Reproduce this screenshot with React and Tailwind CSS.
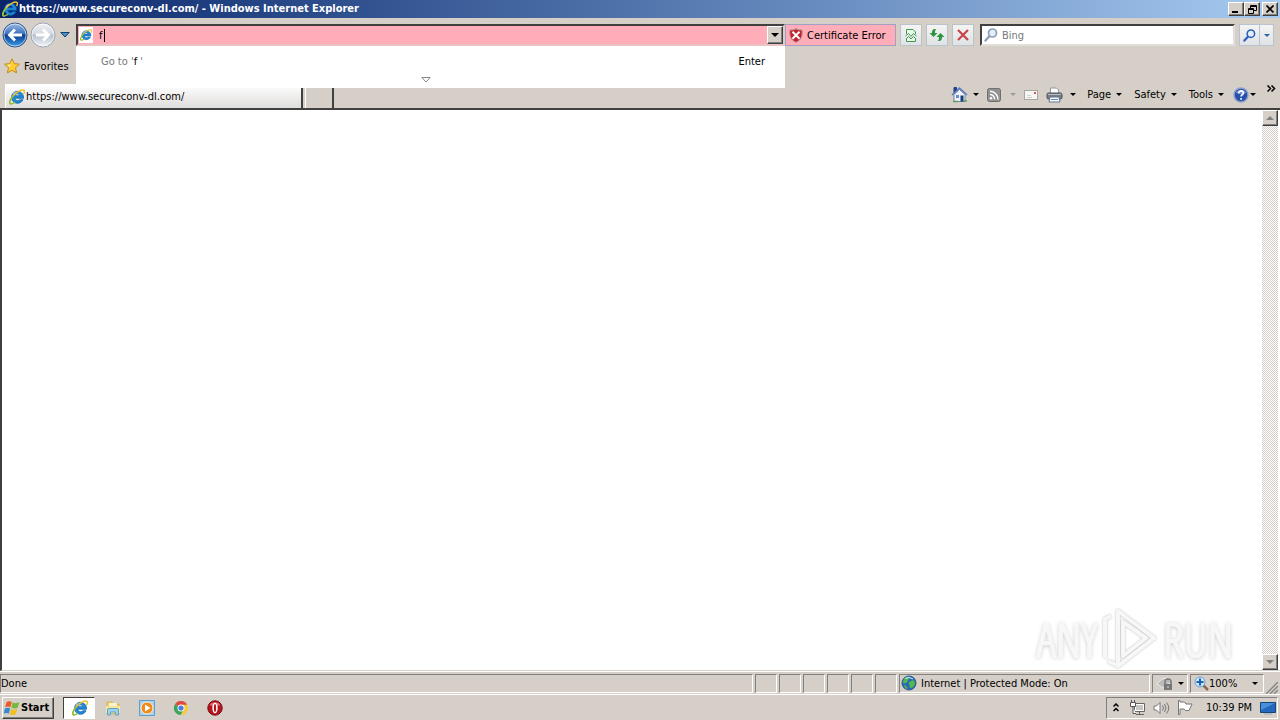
import React, { useState } from "react";

const raised =
  "border border-t-white border-l-white border-r-[#404040] border-b-[#404040] bg-[#d6cfc8] shadow-[inset_-1px_-1px_0_#808080]";
const sunken = "border border-t-[#808080] border-l-[#808080] border-r-white border-b-white";
const glass = "flex h-[22px] items-center justify-center border border-[#b9c3cf] bg-gradient-to-b from-[#f4f4f2] to-[#dfe3e6]";

function Caret({ className = "" }) {
  return (
    <svg className={className} width="6" height="3" viewBox="0 0 6 3" aria-hidden="true">
      <path d="M0 0h6L3 3z" fill="currentColor" />
    </svg>
  );
}

function IeLogo({ size = 16 }) {
  return (
    <svg className="shrink-0" width={size} height={size} viewBox="0 0 16 16" aria-hidden="true">
      <path d="M14 10.700A6 6 0 1 1 14.500 8v1.300H5.800c.2 2.700 3.700 3 4.800 1.400zM5.900 6.700h4.900c-.4-2.500-4.500-2.400-4.900 0z" fill="#1f8ad8" stroke="#0c5aa6" strokeWidth=".7" fillRule="evenodd" />
      <path d="M4 5.500c1-1.400 2.600-2.100 4.200-2.200" stroke="#9be0fb" strokeWidth="1.200" fill="none" />
      <path d="M2.500 14.900C-.6 15.400.7 10.700 4 7c3.500-4 9.300-7.200 11-5.500.8.800.3 2.300-.4 3.500" fill="none" stroke="#f0c12c" strokeWidth="1.500" />
      <path d="M4 7c-3.300 3.700-4.600 8.400-1.500 7.900 1.200-.1 2.500-.9 3.600-1.700" fill="none" stroke="#8abf3b" strokeWidth="1.400" />
    </svg>
  );
}

function Arrow({ back }) {
  return (
    <svg className="block" width="26" height="26" viewBox="0 0 26 26" aria-hidden="true">
      <defs>
        <linearGradient id={back ? "bk" : "fw"} x1="0" y1="0" x2="0" y2="1">
          <stop offset="0" stopColor={back ? "#9fbce6" : "#f0f2f5"} />
          <stop offset=".45" stopColor={back ? "#3d71bd" : "#d4dae3"} />
          <stop offset=".5" stopColor={back ? "#083b91" : "#b6c0ce"} />
          <stop offset="1" stopColor={back ? "#3fa1e8" : "#f6f8fb"} />
        </linearGradient>
      </defs>
      <circle cx="13" cy="13" r="12" fill={back ? "url(#bk)" : "url(#fw)"} stroke={back ? "#305387" : "#97a2b3"} />
      <circle cx="13" cy="13" r="11" fill="none" stroke="#fff" strokeOpacity=".6" />
      <path
        d={back ? "M20 13H8M13 7.500L7.500 13l5.500 5.500" : "M6 13h12M13 7.500l5.500 5.500-5.500 5.500"}
        fill="none"
        stroke="#fff"
        strokeWidth="2.800"
      />
    </svg>
  );
}

function Magnifier({ color = "#2f5fc0", lens = "#e3effb", size = 14 }) {
  return (
    <svg width={size} height={size} viewBox="0 0 14 14" aria-hidden="true">
      <path d="M1.500 12.500l4-4.500" stroke={color} strokeWidth="2.400" strokeLinecap="round" />
      <circle cx="8.500" cy="5" r="4" fill={lens} stroke={color} strokeWidth="1.700" />
    </svg>
  );
}

function WindowsFlag() {
  return (
    <svg className="shrink-0" width="16" height="16" viewBox="0 0 16 16" aria-hidden="true">
      <path d="M2.600 2c2-1.300 3.600-1 5.200 0L6.400 7.300c-1.600-1-3.300-1.100-5.200 0z" fill="#ea5a25" />
      <path d="M8.600 2.500c1.800.9 3.800 1 6.700-.5L13.700 7.600c-2.300 1.200-4.300 1-6.300.1z" fill="#75b93b" />
      <path d="M.9 8.500c2-1.200 3.700-1 5.300 0l-1.500 5.200c-1.600-.9-3.300-1-5.200.1z" fill="#348bd4" />
      <path d="M7.100 9c1.900 1 4 1 6.300-.2l-1.600 5.400c-2.200 1.200-4.200 1-6.200.1z" fill="#f3bd26" />
    </svg>
  );
}

function Home() {
  return (
    <svg width="17" height="17" viewBox="0 0 17 17" aria-hidden="true">
      <path d="M3 8.500V15.500h11V8.500L8.500 3.500z" fill="#edf2fb" stroke="#7386ac" />
      <path d="M3 7V1.500h2.500v3" fill="#253e91" stroke="#253e91" />
      <path d="M1 9l7.500-7L16 9" fill="none" stroke="#5a78bd" strokeWidth="1.500" />
      <path d="M5 9h3v3H5z" fill="#6a8cc7" />
      <path d="M9.500 9.500h3v6h-3z" fill="#163d72" />
      <path d="M2 15.500h5M13 15h3" stroke="#62a04c" strokeWidth="1.500" />
    </svg>
  );
}

function Feed() {
  return (
    <svg width="14" height="14" viewBox="0 0 14 14" aria-hidden="true">
      <rect x=".5" y=".5" width="13" height="13" rx="2" fill="#929292" stroke="#6f6f6f" />
      <circle cx="4" cy="10.300" r="1.300" fill="#fff" />
      <path d="M3 6.500a4.500 4.500 0 0 1 4.600 4.900M3 3.300a8 8 0 0 1 8 8.100" fill="none" stroke="#fff" strokeWidth="1.500" />
    </svg>
  );
}

function Mail() {
  return (
    <svg width="14" height="10" viewBox="0 0 14 10" aria-hidden="true">
      <rect x=".5" y=".5" width="13" height="9" fill="#f7f6f5" stroke="#a8a5a5" />
      <path d="M10 2h2v2h-2z" fill="#d45b5b" />
      <path d="M3 5.500h4M3 7.500h5" stroke="#d3d0d0" />
    </svg>
  );
}

function Printer() {
  return (
    <svg width="17" height="16" viewBox="0 0 17 16" aria-hidden="true">
      <path d="M4.500 6V1h6l2 2v3" fill="#fff" stroke="#92959b" />
      <rect x="1" y="6" width="15" height="6" rx="1.500" fill="#777d86" stroke="#4e535b" />
      <path d="M2 7.500h13" stroke="#b9bec5" />
      <path d="M4 10h9l1 5H3z" fill="#f6f9fd" stroke="#6c7686" />
      <path d="M5 12.500h7" stroke="#5c8fca" />
    </svg>
  );
}

function Help() {
  return (
    <svg width="16" height="16" viewBox="0 0 16 16" aria-hidden="true">
      <circle cx="8" cy="8" r="7" fill="#2650ad" stroke="#8fa2c8" strokeWidth="1.500" />
      <path d="M3 6a5.500 5.500 0 0 1 10 0c-3 1.500-7 1.500-10 0z" fill="#6f94da" />
      <path d="M5.700 6.300c0-3.200 4.900-3 4.700-.2-.1 1.500-2.300 1.700-2.300 3.500M8.100 11v1.800" stroke="#fff" strokeWidth="1.700" fill="none" />
    </svg>
  );
}

function Shield() {
  return (
    <svg width="14" height="15" viewBox="0 0 14 15" aria-hidden="true">
      <path d="M7 .7C5 2 3 2.200 1 2c-.6 5 .3 10 6 12.300C12.700 12 13.600 7 13 2 11 2.200 9 2 7 .7z" fill="#c7232c" stroke="#a88f91" />
      <path d="M3.500 3.700l7 7M10.500 3.700l-7 7" stroke="#fff" strokeWidth="2" />
    </svg>
  );
}

function Menu({ label, children, faded }) {
  return (
    <button aria-label={label} className="flex h-5 items-center gap-[5px]">
      {children || label}
      <Caret className={faded ? "text-[#a09b98]" : ""} />
    </button>
  );
}

function TitleBar() {
  const box = `${raised} flex h-[14px] w-4 items-center justify-center`;
  return (
    <header className="flex h-[18px] items-center bg-gradient-to-r from-[#0a246a] to-[#a6caf0] pr-[2px] pl-[2px] text-white">
      <IeLogo />
      <h1 className="ml-[1px] flex-1 truncate text-[11px] font-bold">https://www.secureconv-dl.com/ - Windows Internet Explorer</h1>
      <button aria-label="Minimize" className={box}>
        <svg width="8" height="8"><path d="M0 6h6v2H0z" /></svg>
      </button>
      <button aria-label="Restore" className={box}>
        <svg width="9" height="9" fill="none" stroke="#000"><path d="M2.500 3V.5h6v5H6M2 1.500h7M.5 3.500h5v5h-5zM0 4.500h6" /></svg>
      </button>
      <button aria-label="Close" className={`${box} ml-[2px]`}>
        <svg width="8" height="8" stroke="#000" strokeWidth="1.700"><path d="M.5.5l7 7M7.500.5l-7 7" /></svg>
      </button>
    </header>
  );
}

function AddressBar() {
  const [url, setUrl] = useState("f");
  return (
    <div className="relative min-w-0 flex-1">
      <div className="flex h-[22px] items-center border-2 border-t-[#404040] border-r-[#d6cfc8] border-b-[#e8c4c5] border-l-[#404040] bg-[#ffaeb9] pl-[1px]">
        <span className="flex h-4 w-[14px] items-center justify-center bg-white"><IeLogo size={12} /></span>
        <div className="flex min-w-0 flex-1 items-center pl-[6px]">
          <input aria-label="Address" value={url} onChange={(e) => setUrl(e.target.value)} className="w-[5px] bg-transparent pt-px outline-none" />
          <span className="h-[13px] w-px bg-black" />
        </div>
        <button aria-label="Show address list" className={`${raised} flex h-[18px] w-4 items-center justify-center`}>
          <svg width="8" height="4"><path d="M0 0h8L4 4z" /></svg>
        </button>
      </div>
      <div className="absolute top-full right-0 left-0 z-10 h-[42px] bg-white">
        <div className="flex items-center justify-between pt-[9px] pr-5 pl-[25px]">
          <span className="text-[#777]">Go to '<span className="text-black">f</span> '</span>
          <span>Enter</span>
        </div>
        <svg className="mx-auto mt-2 block w-[19px] pr-[9px]" width="19" height="6" fill="#fff" stroke="#888"><path d="M.8.5h8.400L5 5z" /></svg>
      </div>
    </div>
  );
}

function NavBar() {
  return (
    <div className="flex h-[34px] items-center pr-[6px] pl-[2px]">
      <button aria-label="Back"><Arrow back /></button>
      <button aria-label="Forward" className="ml-[2px]"><Arrow /></button>
      <button aria-label="Recent pages" className="ml-1 flex w-[10px] justify-center">
        <svg width="10" height="6"><path d="M.8.5h8.400L5 5z" fill="#4d91c9" stroke="#173f70" /></svg>
      </button>
      <div className="ml-[6px] flex min-w-0 flex-1">
        <AddressBar />
        <button className="flex h-[22px] w-[111px] items-center gap-1 border border-[#a59fc4] bg-[#ffaeb9] pl-[3px]">
          <Shield />
          <span className="whitespace-nowrap pt-px">Certificate Error</span>
        </button>
      </div>
      <div className="ml-1 flex gap-1">
        <button aria-label="Compatibility View" className={`${glass} w-[22px]`}>
          <svg width="12" height="14" fill="none" stroke="#3f9a4d"><path d="M1.500 6V1.500H8L10.500 4v2M1.500 10v3.500h9V10" fill="#eaf7ea" /><path d="M.5 8l3-2.500L6 8.500l2.500-3L11.500 8M1 11l2.500-2.500L6 11l2.500-2.500L11 11" /></svg>
        </button>
        <button aria-label="Refresh" className={`${glass} w-[22px]`}>
          <svg width="16" height="14" fill="#2f9440"><path d="M6 1C3.500 1 3 3 3 5H.5L4.500 9l4-4H6c0-2 0-3 1.500-4zM10 13c2.500 0 3-2 3-4h2.500l-4-4-4 4H10c0 2 0 3-1.500 4z" /></svg>
        </button>
        <button aria-label="Stop" className={`${glass} w-[22px]`}>
          <svg width="12" height="12" stroke="#c9434b" strokeWidth="2.200"><path d="M1 1l10 10M11 1L1 11" /></svg>
        </button>
      </div>
      <label className="ml-[6px] flex h-[22px] w-[255px] items-center gap-1 border-2 border-t-[#404040] border-r-[#e2dedb] border-b-[#e2dedb] border-l-[#404040] bg-white pl-[2px]">
        <Magnifier color="#8d9fb5" />
        <input aria-label="Search" placeholder="Bing" className="min-w-0 flex-1 bg-transparent pt-px outline-none placeholder:text-[#777]" />
      </label>
      <div className="ml-1 flex">
        <button aria-label="Search Bing" className={`${glass} w-[21px]`}><Magnifier size={13} /></button>
        <button aria-label="Search options" className={`${glass} -ml-px w-[15px] text-[#2c65a8]`}><Caret /></button>
      </div>
    </div>
  );
}

function TabRow() {
  return (
    <div className="flex h-7 items-end pl-[5px]">
      <button className="flex h-6 w-[298px] items-center gap-[1px] border-t border-r-2 border-l border-t-white border-r-[#404040] border-l-white bg-gradient-to-b from-white to-[#dfdddb] pl-[3px]">
        <IeLogo />
        <span>https://www.secureconv-dl.com/</span>
      </button>
      <button aria-label="New tab" className="ml-[2px] h-5 w-[29px] border-r-2 border-l border-r-[#404040] border-l-white" />
      <nav className="ml-auto flex h-full items-center pt-px pr-1">
        <Menu label="Home"><Home /></Menu>
        <span className="ml-2"><Menu label="Feeds" faded><span className="mr-1"><Feed /></span></Menu></span>
        <button aria-label="Read mail" className="ml-2"><Mail /></button>
        <span className="ml-2"><Menu label="Print"><span className="mr-[2px]"><Printer /></span></Menu></span>
        <span className="ml-[11px]"><Menu label="Page" /></span>
        <span className="ml-3"><Menu label="Safety" /></span>
        <span className="ml-3"><Menu label="Tools" /></span>
        <button aria-label="Help" className="ml-[9px] flex items-center gap-px"><Help /><Caret /></button>
        <button aria-label="More commands" className="ml-[11px] self-start pt-1">
          <svg width="9" height="7" fill="none" stroke="#000" strokeWidth="1.500"><path d="M.5.5l3 3-3 3M4.500.5l3 3-3 3" /></svg>
        </button>
      </nav>
    </div>
  );
}

function ScrollButton({ up }) {
  return (
    <button aria-label={up ? "Scroll up" : "Scroll down"} className={`${raised} flex h-4 w-4 items-center justify-center text-[#808080]`}>
      <svg className={up ? "rotate-180" : ""} width="8" height="4" fill="currentColor"><path d="M0 0h8L4 4z" /></svg>
    </button>
  );
}

function Watermark() {
  return (
    <div className="absolute right-[29px] -bottom-px flex h-16 items-center font-['Open_Sans_Condensed_Light','Open_Sans_Condensed','Roboto_Condensed',sans-serif] text-[48px] leading-none font-light text-[#f7f7f7] [-webkit-text-stroke:2px_#f7f7f7] [text-shadow:0_1px_4px_#aaa]">
      <span>ANY</span>
      <svg className="mx-1" width="58" height="64" viewBox="0 0 58 64" fill="none" strokeLinejoin="round">
        <g className="[filter:drop-shadow(0_0_1px_#bbb)]">
          <path d="M4 51V12l6-3M17 4l36 27-36 28zM22 15v34l23-18zM7 54l10 5" stroke="#f7f7f7" strokeWidth="4" />
        </g>
      </svg>
      <span>RUN</span>
    </div>
  );
}

function StatusBar() {
  return (
    <footer className="flex h-[23px] items-center gap-[2px] border-t border-white pr-[2px]">
      <div className={`${sunken} h-[19px] flex-1 leading-[17px]`}>Done</div>
      {[0, 1, 2, 3, 4, 5].map((n) => (
        <div key={n} className={`${sunken} h-[19px] w-[22px]`} />
      ))}
      <div className={`${sunken} flex h-[19px] w-[251px] items-center gap-1 pl-px`}>
        <svg width="16" height="16" viewBox="0 0 16 16" aria-hidden="true">
          <circle cx="8" cy="8" r="7" fill="#2668bd" stroke="#31598f" />
          <path d="M3 4c3-4 7-2 5 0s-1 3-3 4-3 0-3-1zM10 6c2-2 4 0 4 2s-2 5-4 5-1-3-2-4 0-2 2-3zM4 10l3 3-2 1-2-3z" fill="#54b948" />
          <path d="M4 3.500Q8 1 12 4" stroke="#c8edff" fill="none" />
        </svg>
        <span className="pt-px">Internet | Protected Mode: On</span>
      </div>
      <button aria-label="Privacy report" className={`${sunken} flex h-[19px] w-9 items-center justify-center gap-1`}>
        <svg width="18" height="15" viewBox="0 0 18 15" aria-hidden="true">
          <path d="M1 8l5-5 6-1 3 4-8 6z" fill="#bbb" stroke="#e9e9e9" />
          <path d="M9 8V6a3 3 0 0 1 6 0v2" fill="none" stroke="#777" strokeWidth="1.500" />
          <path d="M8 8h8v6H8z" fill="#777" /><path d="M12 10v2" stroke="#ddd" />
        </svg>
        <Caret />
      </button>
      <button aria-label="Zoom level 100%" className={`${sunken} flex h-[19px] w-[74px] items-center pl-[3px]`}>
        <svg width="15" height="15" viewBox="0 0 15 15" aria-hidden="true">
          <path d="M9 9l5 5" stroke="#8b684d" strokeWidth="2.500" />
          <circle cx="6" cy="6" r="5" fill="#cde7fa" stroke="#6da2d0" /><path d="M6 2.500v7M2.500 6h7" stroke="#1d60b4" strokeWidth="2" />
        </svg>
        <span className="pt-px">100%</span>
        <Caret className="mr-[5px] ml-auto" />
      </button>
      <svg className="self-end" width="12" height="12" aria-hidden="true"><path d="M0 12L12 0M4 12l8-8M8 12l4-4" stroke="#858585" strokeWidth="1.500" /></svg>
    </footer>
  );
}

function TaskBar() {
  return (
    <footer className="flex h-[26px] items-center border-t border-white pr-[2px] pl-[2px]">
      <button className={`${raised} flex h-[22px] w-[52px] items-center gap-px pl-px font-bold`}>
        <WindowsFlag />
        <span>Start</span>
      </button>
      <button aria-label="Internet Explorer" className="ml-[9px] flex h-[22px] w-8 items-center justify-center border border-t-[#404040] border-r-white border-b-white border-l-[#404040] bg-white pl-[2px]"><IeLogo /></button>
      <div className="ml-[10px] flex items-center gap-[18px]">
        <button aria-label="Explorer">
          <svg width="16" height="16" viewBox="0 0 16 16">
            <path d="M2 2h5l1 2h6v10H2z" fill="#edcf6a" stroke="#d6b44e" /><path d="M4 3h8v3H4z" fill="#f9f4d0" /><path d="M1 6h14v7H1z" fill="#f7e59c" />
            <path d="M2.500 15V10q0-1.500 1.500-1.500h8q1.500 0 1.500 1.500v5h-3v-3h-5v3z" fill="#9ed1ec" stroke="#58a4cf" />
          </svg>
        </button>
        <button aria-label="Media Player">
          <svg width="16" height="16" viewBox="0 0 16 16">
            <path d="M.5.5h15v15H.5z" fill="#a9d2f0" stroke="#5d9dcc" /><circle cx="8" cy="8" r="6" fill="#f18a1c" stroke="#fff0d1" /><path d="M6 4.500l5.500 3.500L6 11.500z" fill="#fff" />
          </svg>
        </button>
        <button aria-label="Chrome">
          <svg width="16" height="16" viewBox="0 0 16 16">
            <path d="M8 8L1.800 4.400A7 7 0 0 1 14.200 5z" fill="#de4a3c" /><path d="M8 8V4.700h6.200A7 7 0 0 1 7.500 15z" fill="#f8ca3e" /><path d="M8 8l2.500 2L7.500 15A7 7 0 0 1 1.800 4.400z" fill="#3fa45b" />
            <circle cx="8" cy="8" r="3.500" fill="#fff" /><circle cx="8" cy="8" r="2.600" fill="#477fe1" />
          </svg>
        </button>
        <button aria-label="Opera">
          <svg width="16" height="16" viewBox="0 0 16 16"><circle cx="8" cy="8" r="7.200" fill="#b8131b" stroke="#760a11" /><path d="M2.500 5.500C4 1 12 1 13.500 5.500z" fill="#e27274" /><ellipse cx="8" cy="8" rx="2.700" ry="5.300" fill="#fff" /><ellipse cx="8" cy="8" rx="1.100" ry="4" fill="#b8131b" /></svg>
        </button>
      </div>
      <div className={`${sunken} ml-auto flex h-[22px] w-[172px] items-center pl-[6px]`}>
        <button aria-label="Show hidden icons"><svg width="6" height="9" fill="none" stroke="#000" strokeWidth="1.500"><path d="M.5 3.500L3 1l2.500 2.500M.5 8L3 5.500 5.500 8" /></svg></button>
        <svg className="ml-[10px]" width="17" height="16" viewBox="0 0 17 16" fill="none" aria-hidden="true">
          <path d="M5.500 3.500h10v8h-10zM7 14.500h8M10.500 12v2" fill="#c8c5c2" stroke="#666" /><path d="M6.500 4.500h8v6h-8z" stroke="#fff" /><path d="M1.500 2.500h5v4h-5zM4 7v6.500h3M2.500 0v2M5.500 0v2" fill="#fff" stroke="#555" />
        </svg>
        <svg className="ml-[7px]" width="17" height="14" viewBox="0 0 17 14" fill="none" stroke="#777" aria-hidden="true">
          <path d="M1 5h2.500L7 1.500v11L3.500 9H1z" fill="#fff" /><path d="M9.500 4.500q2 2.500 0 5M11.500 3q3 4 0 8M13.500 1.500q4.500 5.500 0 11" />
        </svg>
        <svg className="ml-[7px]" width="16" height="15" viewBox="0 0 16 15" aria-hidden="true"><path d="M1.500.5v14H3V9h4l1.500 1.500H12l3-6.500H9L7.500 2H3V.5z" fill="#fff" stroke="#777" /></svg>
        <time className="ml-[13px] flex-1 whitespace-nowrap">10:39 PM</time>
        <svg className="mr-px" width="16" height="14" viewBox="0 0 16 14" aria-hidden="true"><path d="M.5 1.500h15v10H.5z" fill="#2468bd" stroke="#184578" /><path d="M1 2h14L1 9z" fill="#4990db" /><path d="M4 13h8" stroke="#98a5b5" /></svg>
      </div>
    </footer>
  );
}

export default function App() {
  return (
    <div className="flex h-screen flex-col overflow-hidden bg-[#d6cfc8] font-['Tahoma','DejaVu_Sans_Condensed','DejaVu_Sans',sans-serif] text-[11px] leading-[14px] text-black">
      <TitleBar />
      <NavBar />
      <div className="flex h-7 items-center pl-1">
        <button className="flex items-center gap-1">
          <svg width="16" height="16" viewBox="0 0 16 16" aria-hidden="true"><path d="M8 .8l2.200 4.800 5.200.6-3.900 3.500 1.100 5.200L8 12.300l-4.600 2.600 1.100-5.200L.6 6.200l5.200-.6z" fill="#ffcd35" stroke="#c98a1e" /><path d="M8 3l-1.500 3.500L3 7l3 2z" fill="#fff0a2" /></svg>
          <span className="pt-px">Favorites</span>
        </button>
      </div>
      <TabRow />
      <main className="relative flex min-h-0 flex-1 border-t-2 border-b border-l-2 border-t-[#404040] border-b-[#d6cfc8] border-l-[#404040] bg-white">
        <div className="relative flex-1"><Watermark /></div>
        <div className="mr-[2px] flex w-4 flex-col justify-between bg-[#e9e5e2] bg-[repeating-conic-gradient(#fff_0_25%,#d6cfc8_0_50%)] bg-[length:2px_2px]">
          <ScrollButton up />
          <ScrollButton />
        </div>
      </main>
      <StatusBar />
      <TaskBar />
    </div>
  );
}
